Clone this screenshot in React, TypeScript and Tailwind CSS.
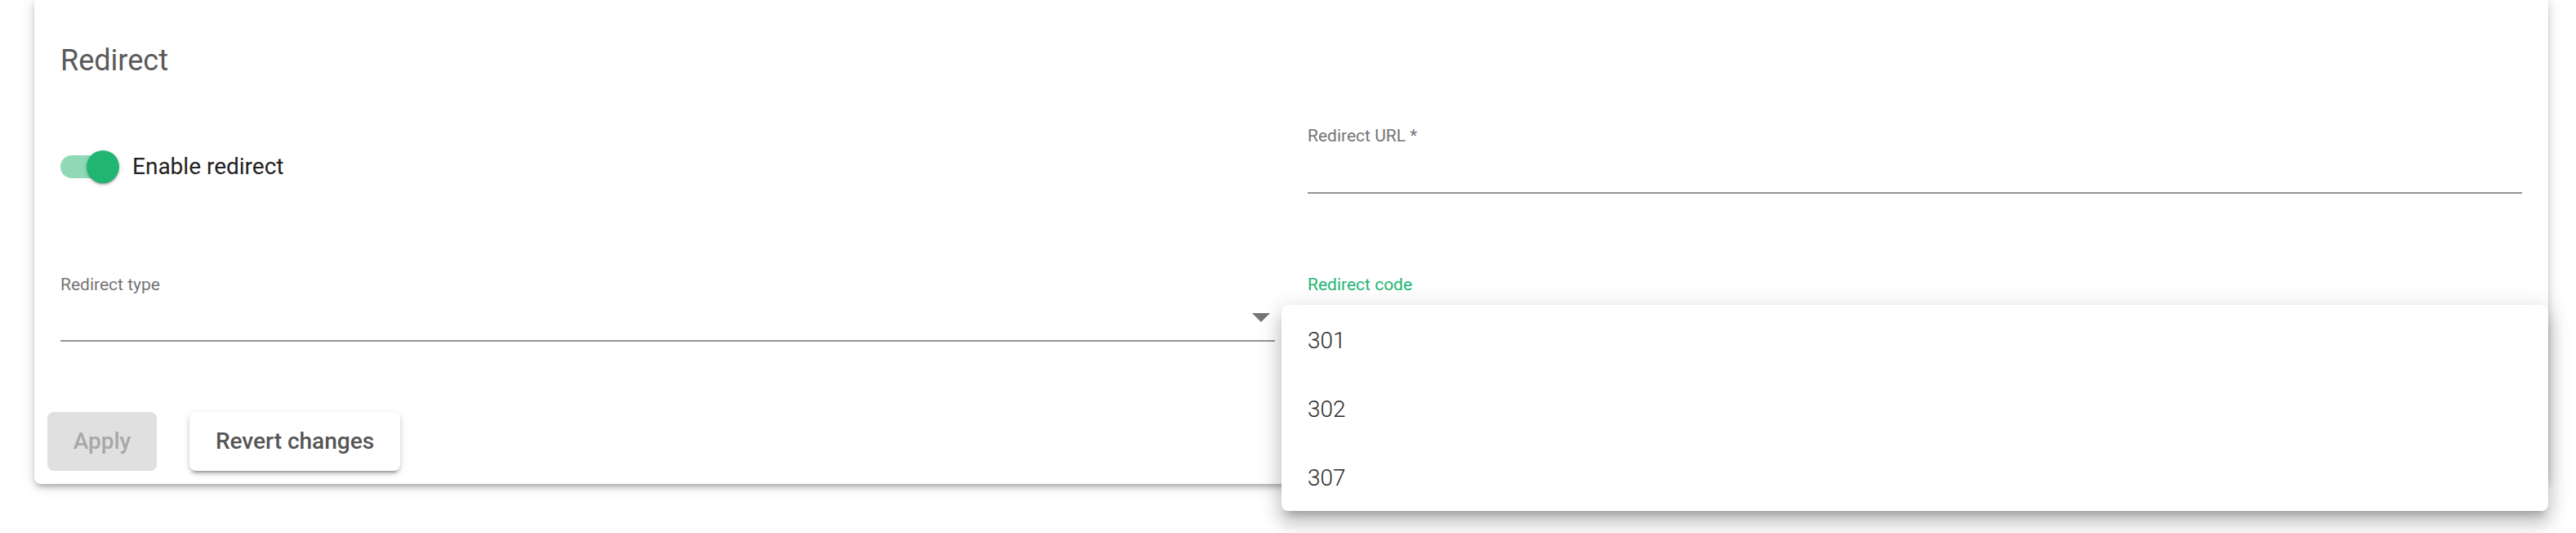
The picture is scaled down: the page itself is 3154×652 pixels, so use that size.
import React from "react"

// menu values for redirect code
const codes = ["301", "302", "307"]

const App = () => {
  return (
    <div className="relative w-[3154px] h-[652px] overflow-hidden bg-white font-['Roboto','Liberation_Sans',sans-serif]">
      {/* card */}
      <div className="ml-[42px] w-[3078px] bg-white rounded-b-[8px] shadow-[0_6px_6px_-4px_rgba(0,0,0,0.2),0_4px_8px_0_rgba(0,0,0,0.14),0_2px_20px_0_rgba(0,0,0,0.12)]">
        <div className="px-[32px] pt-[45px]">
          <h2 className="text-[36px] leading-[58px] font-normal text-[#5a5a5a]">Redirect</h2>

          {/* row 1 */}
          <div className="grid grid-cols-2 gap-x-[40px] mt-[51px]">
            <div className="flex items-center pt-[30px] self-start">
              <div className="relative w-[84px] h-[40px]">
                <div className="absolute left-0 top-[6px] w-[68px] h-[28px] rounded-full bg-[#8fd9b6]" />
                <div className="absolute left-[32px] top-0 w-[40px] h-[40px] rounded-full bg-[#21b573] shadow-[0_3px_2px_-2px_rgba(0,0,0,0.3),0_2px_3px_0_rgba(0,0,0,0.14),0_1px_6px_0_rgba(0,0,0,0.12)]" />
              </div>
              <span className="ml-[4px] text-[28px] leading-[40px] text-[#212121]">Enable redirect</span>
            </div>
            <div className="flex flex-col">
              <label className="text-[21px] leading-[24px] text-[#757575]">Redirect URL *</label>
              <div className="h-[59px] border-b-2 border-[#949494]" />
            </div>
          </div>

          {/* row 2 */}
          <div className="grid grid-cols-2 gap-x-[40px] mt-[99px]">
            <div className="flex flex-col">
              <label className="text-[21px] leading-[24px] text-[#757575]">Redirect type</label>
              <div className="relative h-[58px] border-b-2 border-[#949494]">
                <svg className="absolute right-[6px] top-[23px]" width="22" height="11" viewBox="0 0 22 11">
                  <path d="M0 0 L11 11 L22 0 Z" fill="#757575" />
                </svg>
              </div>
            </div>
            <div className="flex flex-col">
              <label className="text-[21px] leading-[24px] text-[#21b573]">Redirect code</label>
              <div className="h-[58px] border-b-2 border-[#949494]" />
            </div>
          </div>
        </div>

        {/* actions */}
        <div className="flex items-center gap-[40px] px-[16px] pt-[86px] pb-[16px]">
          <button disabled className="w-[134px] h-[72px] rounded-[8px] bg-[#e0e0e0] text-[28px] font-medium text-[#a8a8a8]">Apply</button>
          <button className="w-[258px] h-[72px] rounded-[8px] bg-white text-[28px] font-medium text-[#555555] shadow-[0_6px_2px_-4px_rgba(0,0,0,0.2),0_4px_4px_0_rgba(0,0,0,0.14),0_2px_10px_0_rgba(0,0,0,0.12)]">Revert changes</button>
        </div>
      </div>

      {/* open dropdown for redirect code */}
      <div className="absolute left-[1569px] top-[373px] w-[1551px] bg-white rounded-[8px] shadow-[0_10px_10px_-6px_rgba(0,0,0,0.2),0_16px_20px_2px_rgba(0,0,0,0.14),0_6px_28px_4px_rgba(0,0,0,0.12)]">
        {codes.map((c) => (
          <div key={c} className="h-[84px] flex items-center px-[32px] pt-[3px] text-[28px] font-light text-[#2a2a2a]">{c}</div>
        ))}
      </div>
    </div>
  )
}

export default App
